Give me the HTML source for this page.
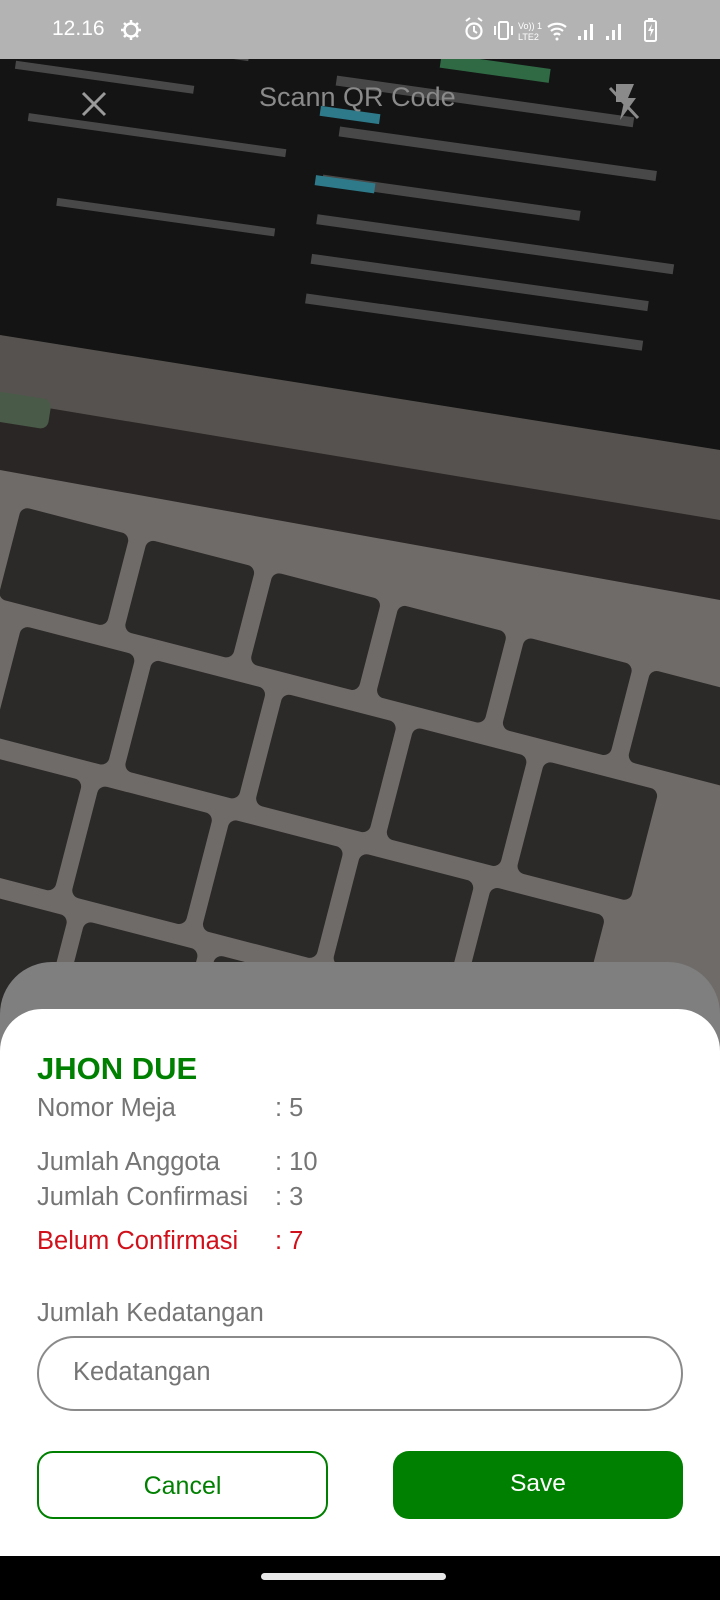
<!DOCTYPE html>
<html><head><meta charset="utf-8"><style>
html,body{margin:0;padding:0}
body{width:720px;height:1600px;position:relative;overflow:hidden;font-family:"Liberation Sans",Roboto,sans-serif;background:#1a1a1a}
.abs{position:absolute}
.sb{left:0;top:0;width:720px;height:59px;background:#b3b3b3;color:#fff}
.lbl{position:absolute;left:37px;font-size:25.5px;color:#757575;white-space:nowrap}
.val{position:absolute;left:275px;font-size:25.5px;color:#757575}
</style></head><body>
<svg class="abs" style="left:0;top:0" width="720" height="1600" viewBox="0 0 720 1600">
<rect width="720" height="1600" fill="#141414"/>
<g fill="#555" opacity="0.8" transform="rotate(8 360 200)">
<rect x="0" y="70" width="230" height="8"/><rect x="0" y="110" width="180" height="8"/><rect x="20" y="160" width="260" height="8"/><rect x="60" y="240" width="220" height="8"/>
<rect x="320" y="80" width="300" height="10"/><rect x="330" y="130" width="320" height="10"/><rect x="320" y="180" width="260" height="10"/><rect x="320" y="220" width="360" height="10"/><rect x="320" y="260" width="340" height="10"/><rect x="320" y="300" width="340" height="10"/>
</g>
<rect x="440" y="62" width="110" height="14" fill="#2f6a45" transform="rotate(8 500 70)"/>
<rect x="320" y="110" width="60" height="10" fill="#2e7a8a" transform="rotate(8 350 115)"/>
<rect x="315" y="180" width="60" height="10" fill="#2e7a8a" transform="rotate(8 350 185)"/>
<polygon points="0,335 720,450 720,1600 0,1600" fill="#56524f"/>
<polygon points="0,400 720,520 720,1600 0,1600" fill="#2a2625"/>
<polygon points="0,470 720,600 720,1600 0,1600" fill="#6f6b69"/>
<rect x="-10" y="395" width="60" height="30" rx="8" fill="#4a5a48" transform="rotate(9 20 410)"/>
<g transform="rotate(14.5 0 470)" fill="#2c2a29">
<rect x="30" y="500" width="112" height="95" rx="8"/><rect x="160" y="500" width="112" height="95" rx="8"/><rect x="290" y="500" width="112" height="95" rx="8"/><rect x="420" y="500" width="112" height="95" rx="8"/><rect x="550" y="500" width="112" height="95" rx="8"/><rect x="680" y="500" width="112" height="95" rx="8"/>
<rect x="-60" y="615" width="30" height="115" rx="8"/><rect x="60" y="615" width="118" height="115" rx="8"/><rect x="195" y="615" width="118" height="115" rx="8"/><rect x="330" y="615" width="118" height="115" rx="8"/><rect x="465" y="615" width="118" height="115" rx="8"/><rect x="600" y="615" width="118" height="115" rx="8"/>
<rect x="40" y="750" width="118" height="115" rx="8"/><rect x="175" y="750" width="118" height="115" rx="8"/><rect x="310" y="750" width="118" height="115" rx="8"/><rect x="445" y="750" width="118" height="115" rx="8"/><rect x="580" y="750" width="118" height="115" rx="8"/>
<rect x="60" y="885" width="118" height="115" rx="8"/><rect x="195" y="885" width="118" height="115" rx="8"/><rect x="330" y="885" width="118" height="115" rx="8"/>
</g>
</svg>
<div class="abs sb">
<div class="abs" style="left:52px;top:17px;font-size:21px">12.16</div>
<svg class="abs" style="left:120px;top:19px" width="22" height="22" viewBox="0 0 22 22"><circle cx="11" cy="11" r="6.5" fill="none" stroke="#fff" stroke-width="2.5"/><path d="M11 1v4M11 17v4M1 11h4M17 11h4M4 4l3 3M15 15l3 3M4 18l3-3M15 7l3-3" stroke="#fff" stroke-width="2.5"/></svg>
<svg class="abs" style="left:462px;top:16px" width="210" height="28" viewBox="0 0 210 28" fill="#fff" stroke="#fff">
<circle cx="12" cy="15" r="7.5" fill="none" stroke-width="2.2"/><path d="M12 10v5l3 2M4 5l4-3M20 5l-4-3" fill="none" stroke-width="2"/>
<rect x="37" y="6" width="9" height="17" rx="1.5" fill="none" stroke-width="2"/><path d="M33 10v9M50 10v9" stroke-width="2"/>
<text x="56" y="13" font-size="9" stroke="none" font-family="Liberation Sans">Vo)) 1</text><text x="56" y="24" font-size="9" stroke="none" font-family="Liberation Sans">LTE2</text>
<path d="M86 11a14 14 0 0 1 18 0M89 15a9 9 0 0 1 12 0M92 19a4 4 0 0 1 6 0" fill="none" stroke-width="2.2"/><circle cx="95" cy="23" r="1.5" stroke="none"/>
<rect x="116" y="20" width="3" height="4" stroke="none"/><rect x="122" y="14" width="3" height="10" stroke="none"/><rect x="128" y="8" width="3" height="16" stroke="none"/>
<rect x="144" y="20" width="3" height="4" stroke="none"/><rect x="150" y="14" width="3" height="10" stroke="none"/><rect x="156" y="8" width="3" height="16" stroke="none"/>
<rect x="183" y="5" width="11" height="20" rx="1.5" fill="none" stroke-width="2"/><rect x="186" y="2" width="5" height="3" stroke="none"/><path d="M190 8l-4 7h3l-1 6 4-8h-3z" stroke="none"/>
</svg>
</div>
<svg class="abs" style="left:80px;top:90px" width="28" height="28" viewBox="0 0 28 28"><path d="M3 3L25 25M25 3L3 25" stroke="#9a9a9a" stroke-width="3"/></svg>
<div class="abs" style="left:259px;top:82px;font-size:27px;color:#8a8a8a">Scann QR Code</div>
<svg class="abs" style="left:606px;top:82px" width="36" height="40" viewBox="0 0 36 40"><path d="M10 2h18l-6 14h8L14 38l4-18h-8z" fill="#8a8a8a"/><path d="M4 6L32 36" stroke="#8a8a8a" stroke-width="3"/></svg>
<div class="abs" style="left:0;top:962px;width:720px;height:200px;background:#7f7f7f;border-radius:52px 52px 0 0"></div>
<div class="abs" style="left:0;top:1009px;width:720px;height:560px;background:#fff;border-radius:42px 42px 0 0"></div>
<div class="abs" style="left:37px;top:1051px;font-size:31px;font-weight:bold;color:#008000">JHON DUE</div>
<div class="lbl" style="top:1094px">Nomor Meja</div><div class="val" style="top:1094px">: 5</div>
<div class="lbl" style="top:1148px">Jumlah Anggota</div><div class="val" style="top:1148px">: 10</div>
<div class="lbl" style="top:1183px">Jumlah Confirmasi</div><div class="val" style="top:1183px">: 3</div>
<div class="lbl" style="top:1227px;color:#d0111b">Belum Confirmasi</div><div class="val" style="top:1227px;color:#d0111b">: 7</div>
<div class="lbl" style="top:1299px">Jumlah Kedatangan</div>
<div class="abs" style="left:37px;top:1336px;width:646px;height:75px;border:2px solid #8a8a8a;border-radius:38px;box-sizing:border-box"></div>
<div class="abs" style="left:73px;top:1358px;font-size:25.5px;color:#757575">Kedatangan</div>
<div class="abs" style="left:37px;top:1451px;width:291px;height:68px;border:2px solid #008000;border-radius:16px;box-sizing:border-box;color:#008000;font-size:25px;text-align:center;line-height:66px">Cancel</div>
<div class="abs" style="left:393px;top:1451px;width:290px;height:68px;background:#008000;border-radius:16px;color:#fff;font-size:24.5px;text-align:center;line-height:66px">Save</div>
<div class="abs" style="left:0;top:1556px;width:720px;height:44px;background:#000"></div>
<div class="abs" style="left:261px;top:1573px;width:185px;height:7px;border-radius:4px;background:#e8e8e8"></div>
</body></html>
